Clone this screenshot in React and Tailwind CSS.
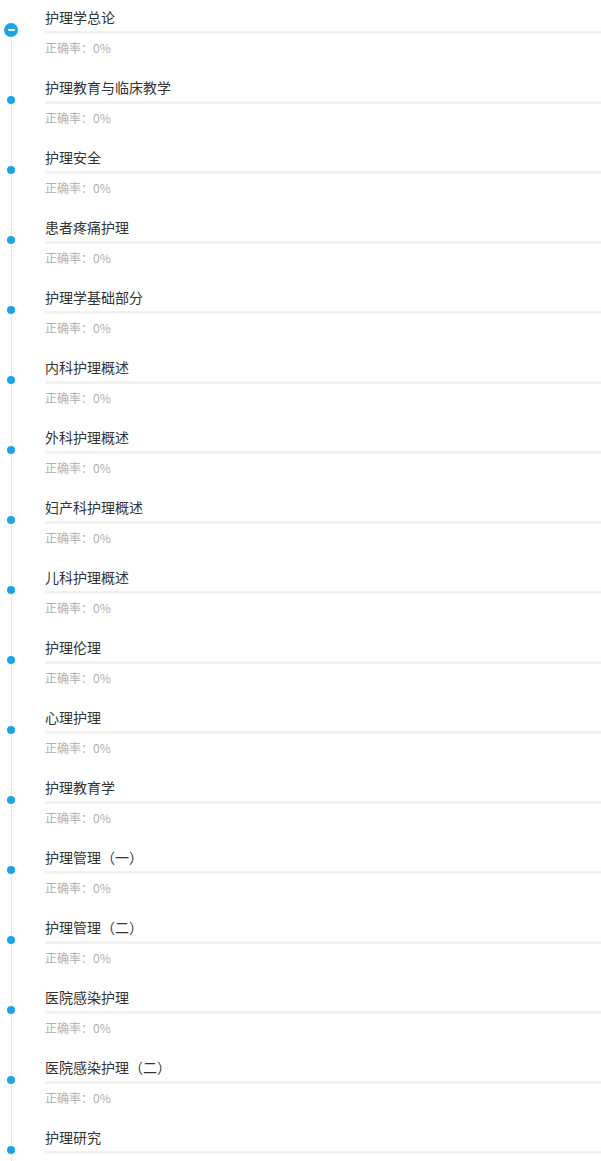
import React from 'react';

const chapters = [
    '护理学总论',
    '护理教育与临床教学',
    '护理安全',
    '患者疼痛护理',
    '护理学基础部分',
    '内科护理概述',
    '外科护理概述',
    '妇产科护理概述',
    '儿科护理概述',
    '护理伦理',
    '心理护理',
    '护理教育学',
    '护理管理（一）',
    '护理管理（二）',
    '医院感染护理',
    '医院感染护理（二）',
    '护理研究',
];

// timeline marker: first chapter is expanded (minus badge), the rest are plain dots
const Marker = ({ open, first }) => (
    <div className="w-[22px] flex flex-col items-center shrink-0">
        {open ? (
            <>
                <div className={`w-px h-[23px] ${first ? 'bg-transparent' : 'bg-[#d9eef8]'}`} />
                <div className="w-[14px] h-[14px] rounded-full bg-[#1aa6e4] flex items-center justify-center">
                    <div className="w-[7px] h-[2px] bg-white rounded-sm" />
                </div>
            </>
        ) : (
            <>
                <div className="w-px h-[26px] bg-[#d9eef8]" />
                <div className="w-[8px] h-[8px] rounded-full bg-[#1aa6e4]" />
            </>
        )}
        <div className="w-px flex-1 bg-[#d9eef8]" />
    </div>
);

const ChapterRow = ({ title, index, last }) => (
    <div className="flex h-[70px]">
        <Marker open={index === 0} first={index === 0} />
        <div className="flex-1 ml-[23px] flex flex-col">
            <div className="mt-[7px] h-[20px] leading-[20px] text-[14px] text-[#333333]">
                {title}
            </div>
            <div className="mt-[4px] h-[3px] bg-[#f2f2f2]" />
            {!last && (
                <div className="mt-[7px] h-[14px] leading-[14px] text-[12px] text-[#b0b0b0]">
                    正确率：0%
                </div>
            )}
        </div>
    </div>
);

export default function App() {
    return (
        <div
            className="w-[601px] h-[1161px] overflow-hidden bg-white"
            style={{ fontFamily: '"Noto Sans CJK SC", "Noto Sans", sans-serif' }}
        >
            {chapters.map((c, i) => (
                <ChapterRow key={c} title={c} index={i} last={i === chapters.length - 1} />
            ))}
        </div>
    );
}
